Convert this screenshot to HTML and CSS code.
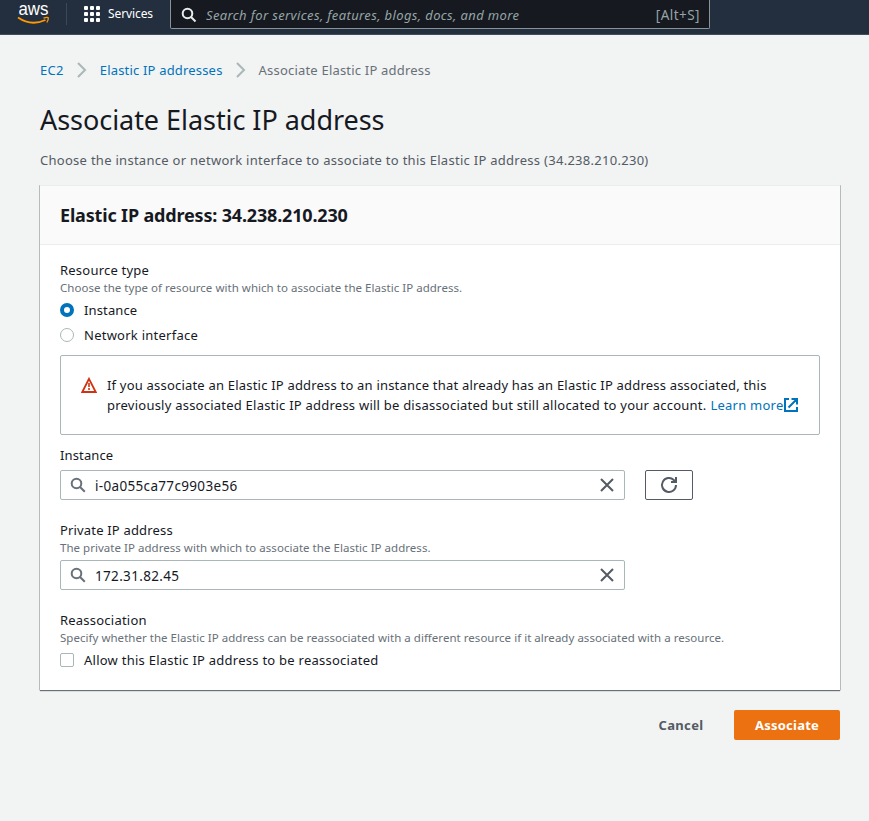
FILE: index.html
```html
<!DOCTYPE html>
<html lang="en">
<head>
<meta charset="utf-8">
<title>Associate Elastic IP address</title>
<link rel="stylesheet" href="styles.css">
</head>
<body>
<header class="topbar">
  <a class="logo">
    <svg width="34" height="26" viewBox="0 0 34 26"><text class="logo-text" x="1.4" y="15.4" textLength="30" lengthAdjust="spacingAndGlyphs">aws</text><path d="M1 17.500Q14 26.500 28.500 20" fill="none" stroke="#f90" stroke-width="1.800"/><path d="M26.500 18.200Q31 16.800 31.300 18Q31.500 20 29.800 22.500" fill="none" stroke="#f90" stroke-width="1.300"/></svg>
  </a>
  <span class="divider"></span>
  <svg class="grid-icon" width="16" height="16" viewBox="0 0 16 16" fill="#fff"><rect width="4" height="4" rx="1"/><rect x="6" width="4" height="4" rx="1"/><rect x="12" width="4" height="4" rx="1"/><rect y="6" width="4" height="4" rx="1"/><rect x="6" y="6" width="4" height="4" rx="1"/><rect x="12" y="6" width="4" height="4" rx="1"/><rect y="12" width="4" height="4" rx="1"/><rect x="6" y="12" width="4" height="4" rx="1"/><rect x="12" y="12" width="4" height="4" rx="1"/></svg>
  <span class="services">Services</span>
  <div class="search">
    <svg width="16" height="16" viewBox="0 0 16 16" fill="none" stroke="#eaeded" stroke-width="2"><circle cx="6.500" cy="6.500" r="4.800"/><path d="M10 10l4.500 4.500"/></svg>
    <span class="search-hint">Search for services, features, blogs, docs, and more</span>
    <span class="shortcut">[Alt+S]</span>
  </div>
</header>
<main class="page">
  <nav class="crumbs">
    <a class="crumb-root">EC2</a>
    <svg width="10" height="16" viewBox="0 0 10 16" fill="none" stroke="#aab7b8" stroke-width="2"><path d="M1 1l7 7l-7 7"/></svg>
    <a class="crumb-parent">Elastic IP addresses</a>
    <svg width="10" height="16" viewBox="0 0 10 16" fill="none" stroke="#aab7b8" stroke-width="2"><path d="M1 1l7 7l-7 7"/></svg>
    <span class="crumb-current">Associate Elastic IP address</span>
  </nav>
  <h1>Associate Elastic IP address</h1>
  <p class="intro">Choose the instance or network interface to associate to this Elastic IP address (34.238.210.230)</p>
  <section class="card">
    <h2><span>Elastic IP address: 34.238.210.230</span></h2>
    <div class="card-body">
      <div class="label l-type">Resource type</div>
      <div class="hint h-type">Choose the type of resource with which to associate the Elastic IP address.</div>
      <div class="choice"><span class="radio on"></span><span class="c-inst">Instance</span></div>
      <div class="choice"><span class="radio"></span><span class="c-net">Network interface</span></div>
      <div class="alert">
        <svg width="16" height="16" viewBox="0 0 16 16" fill="none" stroke="#d13212" stroke-width="1.800"><path d="M8 1.800L14.700 15H1.300Z"/><path d="M8 6v4M8 11v2" stroke-width="1.600"/></svg>
        <div class="alert-text">
          <div class="a1">If you associate an Elastic IP address to an instance that already has an Elastic IP address associated, this</div>
          <div class="a2"><span class="a2-text">previously associated Elastic IP address will be disassociated but still allocated to your account.</span><a class="learn">Learn more</a><svg width="16" height="16" viewBox="0 0 16 16" fill="none" stroke="#0073bb" stroke-width="2"><path d="M6 2H2v12h12v-4M8.500 2H14v5.500M14 2L5.500 10.500"/></svg></div>
        </div>
      </div>
      <div class="label l-inst">Instance</div>
      <div class="row">
        <div class="field">
          <svg width="16" height="16" viewBox="0 0 16 16" fill="none" stroke="#687078" stroke-width="2"><circle cx="6.500" cy="6.500" r="4.800"/><path d="M10 10l4.800 4.800"/></svg>
          <span class="v-inst">i-0a055ca77c9903e56</span>
          <svg class="clear" width="16" height="16" viewBox="0 0 16 16" fill="none" stroke="#545b64" stroke-width="2"><path d="M2 2l12 12M14 2L2 14"/></svg>
        </div>
        <button class="refresh"><svg width="18" height="18" viewBox="0 0 18 18" fill="none" stroke="#545b64" stroke-width="2"><path d="M16 9a7 7 0 1 1-2.200-5.100L15 5.500"/><path d="M16 1v5h-5"/></svg></button>
      </div>
      <div class="label l-priv">Private IP address</div>
      <div class="hint h-priv">The private IP address with which to associate the Elastic IP address.</div>
      <div class="row">
        <div class="field">
          <svg width="16" height="16" viewBox="0 0 16 16" fill="none" stroke="#687078" stroke-width="2"><circle cx="6.500" cy="6.500" r="4.800"/><path d="M10 10l4.800 4.800"/></svg>
          <span class="v-priv">172.31.82.45</span>
          <svg class="clear" width="16" height="16" viewBox="0 0 16 16" fill="none" stroke="#545b64" stroke-width="2"><path d="M2 2l12 12M14 2L2 14"/></svg>
        </div>
      </div>
      <div class="label l-re">Reassociation</div>
      <div class="hint h-re">Specify whether the Elastic IP address can be reassociated with a different resource if it already associated with a resource.</div>
      <div class="choice"><span class="check"></span><span class="c-allow">Allow this Elastic IP address to be reassociated</span></div>
    </div>
  </section>
  <footer class="actions">
    <button class="cancel">Cancel</button>
    <button class="submit">Associate</button>
  </footer>
</main>
</body>
</html>
```
FILE: styles.css
```css
* { box-sizing: border-box; }
body { margin: 0; height: 821px; overflow: hidden; background: #f2f3f3; color: #16191f; font: 13px/20px "Noto Sans", "Open Sans", sans-serif; letter-spacing: .22px; white-space: nowrap; }
svg { display: block; flex: none; }
h1, h2, p { margin: 0; }
button { font: inherit; letter-spacing: inherit; margin: 0; padding: 0; border-radius: 2px; }
a { color: #0073bb; }

.topbar { height: 35px; display: flex; background: #232f3e; border-bottom: 1px solid #414d5c; color: #fff; }
.logo { margin-left: 17px; width: 49px; }
.logo-text { font: 17.5px "Liberation Sans", sans-serif; letter-spacing: 0; fill: #fff; }
.divider { width: 1px; height: 22px; margin-top: 3px; background: #3d4855; }
.grid-icon { margin: 6px 8px 0 17px; }
.services { width: 62px; margin-top: 4px; font-size: 12px; letter-spacing: -.1px; }
.search { width: 540px; height: 29px; display: flex; align-items: center; padding: 2px 9px 0 10px; background: #16191f; border: 1px solid #879596; border-top: 0; border-radius: 0 0 2px 2px; color: #95a5a6; }
.search svg { margin-bottom: 1px; }
.search-hint { margin-left: 9px; font-style: italic; letter-spacing: .37px; }
.shortcut { margin-left: auto; font-size: 13.5px; letter-spacing: .45px; }

.page { padding: 25px 29px 0 40px; }
.crumbs { display: flex; height: 20px; align-items: center; }
.crumbs svg { margin: 0 13px; }
.crumb-root { letter-spacing: .3px; }
.crumb-parent { letter-spacing: .18px; }
.crumb-current { color: #687078; letter-spacing: .2px; }
h1 { margin-top: 20px; height: 40px; font-size: 27px; line-height: 40px; font-weight: 400; letter-spacing: -.05px; }
.intro { margin-top: 10px; color: #545b64; letter-spacing: .28px; }

.card { width: 800px; height: 505px; margin-top: 15px; background: #fff; box-shadow: 0 1px 1px #687078, -1px 0 0 #c5cbcb, 1px 0 0 #c5cbcb; }
h2 { height: 60px; padding: 20px 20px 0; line-height: 20px; font-size: 18px; font-weight: 700; letter-spacing: -.17px; background: #fafafa; border-bottom: 1px solid #eaeded; box-shadow: inset 0 1px 0 #eaeded; }
.card-body { padding: 15px 20px 0; }
.label { height: 20px; }
.hint { height: 15px; line-height: 15px; font-size: 11.5px; letter-spacing: .03px; color: #687078; }
.choice { height: 20px; margin-top: 5px; display: flex; align-items: center; gap: 10px; }
.radio, .check { width: 14px; height: 14px; border: 1px solid #aab7b8; border-radius: 50%; background: #fff; }
.radio.on { border: 4px solid #0073bb; }
.check { border-radius: 2px; }
.c-net, .c-allow { letter-spacing: .25px; }
.alert { height: 80px; margin-top: 10px; padding: 19px 20px; display: flex; gap: 10px; border: 1px solid #aab7b8; border-radius: 2px; }
.alert svg { margin-top: 2px; }
.a1 { letter-spacing: .2px; }
.a2 { display: flex; letter-spacing: .23px; }
.learn { margin-left: 4px; }
.l-inst { margin-top: 10px; }
.l-inst, .c-inst { letter-spacing: .13px; }
.l-priv, .l-re { margin-top: 20px; }
.l-priv { letter-spacing: .17px; }
.row { display: flex; gap: 20px; margin-top: 5px; }
.field { width: 565px; height: 30px; display: flex; align-items: center; padding: 0 9px; border: 1px solid #aab7b8; border-radius: 2px; }
.field span { margin: 2px 0 0 9px; font-size: 13.5px; letter-spacing: .33px; }
.clear { margin-left: auto; }
.refresh { width: 48px; height: 30px; display: grid; place-items: center; background: #fff; border: 1px solid #545b64; }
.actions { width: 800px; height: 30px; margin-top: 20px; display: flex; justify-content: flex-end; gap: 10px; font-weight: 700; }
.cancel { width: 86px; border: 0; background: none; color: #545b64; letter-spacing: .35px; }
.submit { width: 106px; border: 0; background: #ec7211; color: #fff; letter-spacing: .25px; }
```
